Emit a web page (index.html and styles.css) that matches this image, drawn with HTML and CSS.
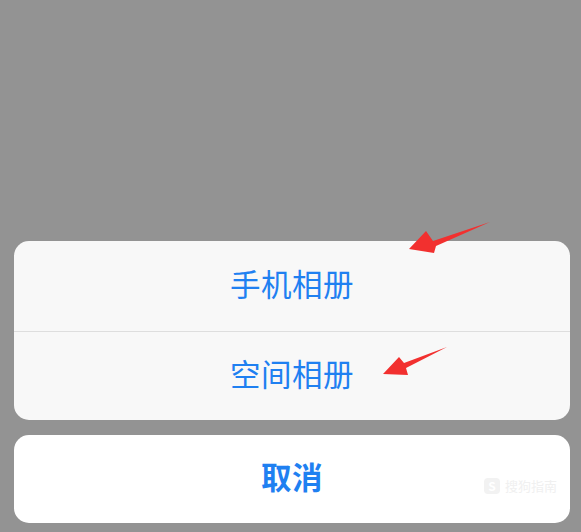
FILE: index.html
```html
<!DOCTYPE html>
<html lang="zh-CN">
<head>
  <meta charset="UTF-8" />
  <meta name="viewport" content="width=device-width, initial-scale=1.0"/>
  <title>选择相册</title>
  <link rel="stylesheet" href="styles.css">
</head>
<body>

  <div class="screen">
    <div class="sheet">
      <div class="sheet-group">
        <button class="sheet-item">手机相册</button>
        <button class="sheet-item">空间相册</button>
      </div>
      <div class="sheet-group cancel">
        <button class="sheet-item">取消</button>
      </div>
    </div>

    <!-- red annotation arrows -->
    <svg class="marks" width="581" height="532" viewBox="0 0 581 532">
      <polygon points="490,222 433,241 426,231 409,249 434,253 436,246" fill="#f2302f"/>
      <polygon points="447,347 404,363 399,357 383,374 408,375 406,368" fill="#f2302f"/>
    </svg>

    <div class="watermark"><span class="wm-logo">S</span>搜狗指南</div>
  </div>

</body>
</html>
```

FILE: styles.css
```css
body {
  margin: 0;
  padding: 0;
  background: #939393;
  font-family: "Noto Sans CJK SC", "Noto Sans", sans-serif;
}
.screen {
  position: relative;
  width: 581px;
  height: 532px;
  overflow: hidden;
  display: flex;
  flex-direction: column;
  justify-content: flex-end;
}
.sheet {
  display: flex;
  flex-direction: column;
  gap: 15px;
  padding: 0 11px 9px 14px;
}
.sheet-group {
  background: #f8f8f8;
  border-radius: 15px;
  overflow: hidden;
  display: flex;
  flex-direction: column;
}
.sheet-item {
  height: 90px;
  border: none;
  background: transparent;
  font-family: inherit;
  font-size: 30.5px;
  letter-spacing: 0.5px;
  color: #1f80f1;
  display: flex;
  align-items: center;
  justify-content: center;
  padding: 0 0 6px 0;
}
.sheet-item + .sheet-item {
  border-top: 1px solid #dedede;
  height: 89px;
}
.cancel {
  background: #ffffff;
}
.cancel .sheet-item {
  height: 88px;
  font-weight: 700;
}
.marks {
  position: absolute;
  left: 0;
  top: 0;
}
.watermark {
  position: absolute;
  left: 484px;
  top: 476px;
  font-size: 13px;
  color: #f0f0f0;
  display: flex;
  align-items: center;
  gap: 5px;
}
.wm-logo {
  width: 16px;
  height: 16px;
  border-radius: 4px;
  background: #f2f2f2;
  color: #ffffff;
  font-size: 12px;
  font-weight: 700;
  display: flex;
  align-items: center;
  justify-content: center;
}
```
